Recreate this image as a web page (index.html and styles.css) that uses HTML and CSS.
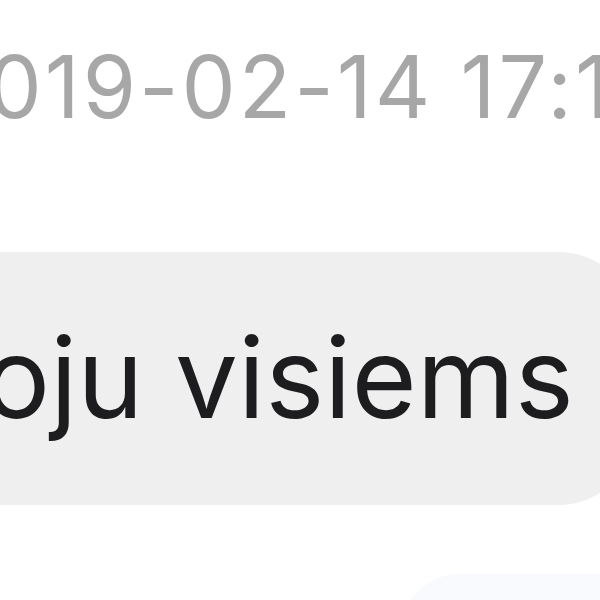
FILE: index.html
```html
<!DOCTYPE html>
<html lang="lt">
<head>
<meta charset="UTF-8" />
<title>Pokalbis</title>
<link rel="stylesheet" href="styles.css">
</head>
<body>
  <div class="thread">
    <div class="timestamp">2019-02-14 17:14</div>

    <div class="row incoming">
      <div class="bubble received">Dėkoju visiems</div>
    </div>

    <div class="row outgoing">
      <div class="bubble sent"></div>
    </div>
  </div>
</body>
</html>
```

FILE: styles.css
```css
/* Zoomed-in view of a chat thread */
html, body {
  overflow: hidden;
}
body {
  margin: 0;
  height: 600px;
  background: #ffffff;
  font-family: Inter, "Liberation Sans", Arial, sans-serif;
}

.thread {
  padding-top: 44px;
}

.timestamp {
  margin-left: -68px;
  font-size: 86px;
  line-height: 1;
  letter-spacing: 3px;
  color: #a7a7a7;
  white-space: nowrap;
}

.row {
  display: flex;
}
.incoming {
  margin-top: 122px;
}
.outgoing {
  margin-top: 69px;
  justify-content: flex-end;
}

.bubble {
  white-space: nowrap;
}
.received {
  margin-left: -262px;
  padding: 66px 64px 69px 40px;
  font-size: 112px;
  line-height: 118px;
  color: #1d1d1f;
  background: #efefef;
  border-radius: 80px;
}
.sent {
  width: 220px;
  height: 120px;
  margin-right: -20px;
  background: #f8fafd;
  border-radius: 60px 0 0 0;
}
```
